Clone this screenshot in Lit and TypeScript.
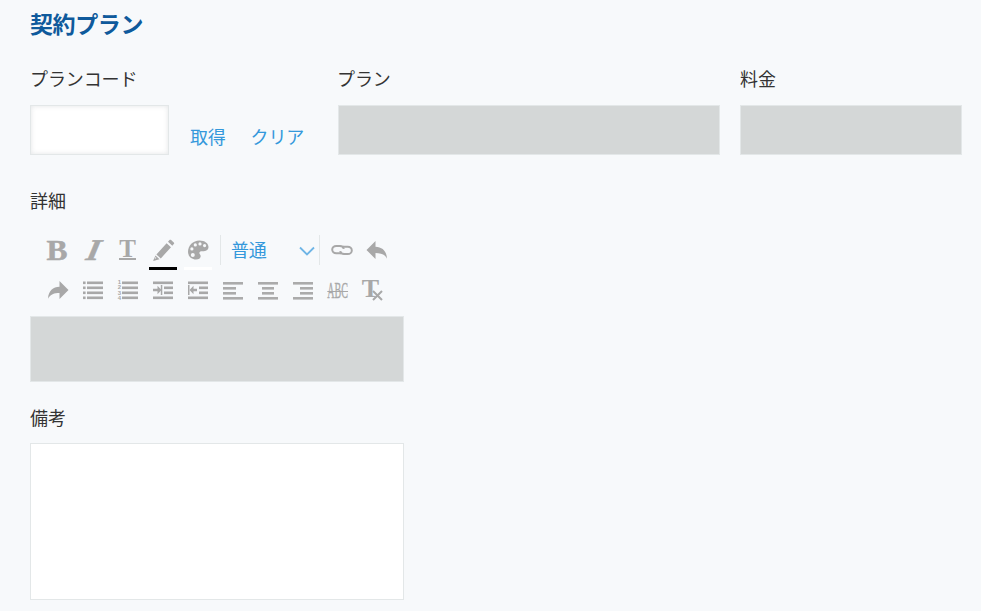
import { LitElement, html, css, svg } from "lit";
import { customElement } from "lit/decorators.js";

const ic = (body: unknown, size = 24) => html`<svg class="ic" width=${size} height=${size} viewBox="0 0 24 24" fill="#a8a8a8">${body}</svg>`;

const bars = (rows: [number, number][]) =>
  rows.map(([x, y]) => svg`<rect x=${x} y=${y} width=${22 - x} height="2.6"/>`);

const fourBars = (x: number) => bars([[x, 3.5], [x, 8.5], [x, 13.5], [x, 18.5]]);

const icons = {
  pen: ic(svg`<path d="M15.6 5.2l4.400 4L9.800 20.400l-4.400-4zM17 3.700l1.500-1.600c.5-.5 1.100-.5 1.600 0l2.700 2.400c.5.5.5 1.100 0 1.600l-1.500 1.600zM4.500 17.600l4 3.600L2 23z"/><path d="M5.400 19.900l-1-.9-.7 1.900z" fill="#f7f9fb"/>`),
  palette: ic(svg`<path fill-rule="evenodd" d="M13.500 2.500c5.300 0 9 2.900 9 6.500 0 3.400-3.300 4.500-6.300 4.300-1.800-.1-3 .6-2.800 2 .2 1.100 1.300 1.500 1.300 2.900 0 2-2 3.300-4.700 3.300C5.600 21.500 2 18.200 2 14 2 7.500 7 2.500 13.500 2.500zM14 4.300a1.600 1.600 0 1 0 0 3.200 1.600 1.600 0 0 0 0-3.200zM18.600 6a1.600 1.600 0 1 0 0 3.200 1.600 1.600 0 0 0 0-3.200zM9.300 5.300a1.600 1.600 0 1 0 0 3.200 1.600 1.600 0 0 0 0-3.200zM5.900 9.300a1.600 1.600 0 1 0 0 3.200 1.600 1.600 0 0 0 0-3.200zM6.800 15a2 2 0 1 0 0 4 2 2 0 0 0 0-4z"/>`),
  link: ic(svg`<g fill="none" stroke="#a8a8a8" stroke-width="2"><path d="M11.500 15.500a4.300 3 0 0 0-1.500-.2H6.200a4 3.700 0 0 1 0-7.400H10a4 3.700 0 0 1 3.800 3"/><path d="M12.500 8.500a4.300 3 0 0 0 1.500.2h3.800a4 3.700 0 0 1 0 7.400H14a4 3.700 0 0 1-3.800-3"/></g>`),
  reply: ic(svg`<path d="M10.500 3v5.700c6.500.3 11 3.700 11.500 12-2.300-4.600-6.300-5.800-11.500-5.800V21L1.500 12z"/>`),
  forward: ic(svg`<path d="M13.500 3v5.700C7 9 2.500 12.400 2 20.700c2.300-4.600 6.300-5.800 11.500-5.800V21l9-9z"/>`),
  ul: ic(svg`${fourBars(6)}<rect x="2" y="3.500" width="2.600" height="2.600"/><rect x="2" y="8.500" width="2.600" height="2.600"/><rect x="2" y="13.500" width="2.600" height="2.600"/><rect x="2" y="18.500" width="2.600" height="2.600"/>`),
  ol: ic(svg`${fourBars(6)}<g class="nums"><text x="1.800" y="5.500">1</text><text x="1.800" y="11">2</text><text x="1.800" y="16.500">3</text><text x="1.800" y="22">4</text></g>`),
  indent: ic(svg`${bars([[2, 3.5], [13, 8.5], [13, 13.5], [2, 18.5]])}<path d="M2 10.700h4.500V7.800l4 4.200-4 4.200v-2.900H2z"/><rect x="9.800" y="7" width="1.500" height="10"/>`),
  outdent: ic(svg`${bars([[2, 3.5], [13, 8.5], [13, 13.5], [2, 18.5]])}<path d="M11 10.700H7.500V7.800l-4 4.200 4 4.200v-2.900H11z"/><rect x="2" y="7" width="1.500" height="10"/>`),
  left: ic(svg`<g fill="#ababab"><rect x="2" y="4" width="20" height="2.600"/><rect x="2" y="9" width="13" height="2.600"/><rect x="2" y="14" width="13" height="2.600"/><rect x="2" y="19" width="20" height="2.600"/></g>`),
  center: ic(svg`<g fill="#ababab"><rect x="2" y="4" width="20" height="2.600"/><rect x="6" y="9" width="12" height="2.600"/><rect x="6" y="14" width="12" height="2.600"/><rect x="2" y="19" width="20" height="2.600"/></g>`),
  right: ic(svg`<g fill="#ababab"><rect x="2" y="4" width="20" height="2.600"/><rect x="9" y="9" width="13" height="2.600"/><rect x="9" y="14" width="13" height="2.600"/><rect x="2" y="19" width="20" height="2.600"/></g>`),
};

@customElement("app-root")
export class AppRoot extends LitElement {
  static styles = css`
    :host {
      display: block;
      height: 611px;
      overflow: hidden;
      box-sizing: border-box;
      padding: 9px 19px 0 30px;
      background: #f7f9fb;
      color: #333;
      font-family: "Noto Sans CJK JP", "Noto Sans", sans-serif;
    }
    h1 {
      margin: 0;
      font-size: 23px;
      line-height: 28px;
      font-weight: 700;
      letter-spacing: -0.4px;
      color: #0f5a9c;
    }
    .label {
      display: block;
      font-size: 18px;
      line-height: 26px;
      letter-spacing: -0.1px;
    }
    .top {
      display: flex;
      margin-top: 28px;
    }
    .top .label { margin-bottom: 14px; }
    .plan .label { margin-left: -1px; }
    .code { width: 308px; }
    .code-row { display: flex; align-items: flex-end; }
    .input {
      box-sizing: border-box;
      width: 139px;
      height: 50px;
      background: #fff;
      border: 1px solid #e3e7e8;
      box-shadow: inset 0 0 5px rgba(55, 70, 80, 0.14);
    }
    .links {
      display: flex;
      gap: 25px;
      margin-left: 21px;
      padding-bottom: 6px;
      font-size: 18px;
      line-height: 26px;
      letter-spacing: -0.2px;
      color: #3498db;
    }
    .plan { width: 382px; margin-right: 20px; }
    .fee { width: 222px; }
    .disabled {
      box-sizing: border-box;
      height: 50px;
      background: #d4d7d7;
      border: 1px solid #e3e7e8;
    }
    .detail { margin-top: 32px; }
    .toolbar {
      width: 374px;
      margin-top: 17px;
      padding-left: 10px;
      box-sizing: border-box;
    }
    .row { display: flex; height: 40px; align-items: center; }
    .btn {
      position: relative;
      flex: none;
      width: 35px;
      height: 40px;
      display: flex;
      align-items: center;
      justify-content: center;
    }
    .ic { display: block; }
    .nums {
      font-family: "Liberation Sans", sans-serif;
      font-size: 6px;
      font-weight: 700;
    }
    .glyph {
      font-family: "Liberation Serif", serif;
      font-size: 30px;
      line-height: 30px;
      font-weight: 700;
      color: #a8a8a8;
    }
    .b {
      display: inline-block;
      -webkit-text-stroke: 0.5px #a8a8a8;
      transform: scaleX(1.05);
    }
    .i {
      display: inline-block;
      font-style: italic;
      -webkit-text-stroke: 0.5px #a8a8a8;
      transform: translateX(1px) skewX(-12deg) scaleX(1.15);
    }
    .u {
      border-bottom: 2px solid #a8a8a8;
      font-size: 25px;
      line-height: 18px;
      height: 18px;
      margin-top: -1px;
    }
    .abc {
      display: inline-block;
      font-size: 24px;
      font-weight: 400;
      text-decoration: line-through;
      text-decoration-thickness: 1px;
      letter-spacing: 0;
      -webkit-text-stroke: 0.4px #a8a8a8;
      transform: scaleX(0.42);
      white-space: nowrap;
    }
    .clear { position: relative; font-size: 26px; line-height: 26px; margin-right: 4px; margin-top: -2px; }
    .clear-x { position: absolute; left: 9px; top: 12px; }
    .bar {
      position: absolute;
      left: 4px;
      right: 3px;
      bottom: 0;
      height: 3px;
    }
    .black { background: #000; }
    .white { background: #fff; }
    .sep {
      flex: none;
      width: 1px;
      height: 30px;
      background: #e3e7e8;
    }
    .sep-s { margin-left: 5px; }
    .sep-l { margin-right: 4px; }
    .picker {
      box-sizing: border-box;
      flex: none;
      width: 98px;
      height: 40px;
      padding: 0 3px 2px 10px;
      display: flex;
      align-items: center;
      justify-content: space-between;
      font-size: 18px;
      letter-spacing: -0.2px;
      color: #3498db;
    }
    .picker svg { display: block; margin-top: 3px; }
    .editor {
      box-sizing: border-box;
      width: 374px;
      height: 66px;
      margin-top: 6px;
      background: #d4d7d7;
      border: 1px solid #e3e7e8;
    }
    .notes { margin-top: 22px; }
    .notes .label { margin-bottom: 13px; }
    .area {
      box-sizing: border-box;
      width: 374px;
      height: 157px;
      background: #fff;
      border: 1px solid #e3e7e8;
    }
  `;

  render() {
    const b = (c: unknown) => html`<div class="btn">${c}</div>`;
    return html`
      <h1>契約プラン</h1>
      <div class="top">
        <div class="code">
          <div class="label">プランコード</div>
          <div class="code-row">
            <div class="input"></div>
            <div class="links"><span>取得</span><span>クリア</span></div>
          </div>
        </div>
        <div class="plan"><div class="label">プラン</div><div class="disabled"></div></div>
        <div class="fee"><div class="label">料金</div><div class="disabled"></div></div>
      </div>
      <div class="detail">
        <div class="label">詳細</div>
        <div class="toolbar">
          <div class="row">
            ${b(html`<span class="glyph b">B</span>`)}
            ${b(html`<span class="glyph i">I</span>`)}
            ${b(html`<span class="glyph u">T</span>`)}
            <div class="btn">${icons.pen}<span class="bar black"></span></div>
            <div class="btn">${icons.palette}<span class="bar white"></span></div>
            <span class="sep sep-s"></span>
            <div class="picker">
              <span>普通</span>
              <svg width="18" height="10" viewBox="0 0 18 10" fill="none" stroke="#6fb5e6" stroke-width="1.800"><path d="M2 1.500l7 7 7-7"/></svg>
            </div>
            <span class="sep sep-l"></span>
            ${b(icons.link)}
            ${b(icons.reply)}
          </div>
          <div class="row">
            ${b(icons.forward)}
            ${b(icons.ul)}
            ${b(icons.ol)}
            ${b(icons.indent)}
            ${b(icons.outdent)}
            ${b(icons.left)}
            ${b(icons.center)}
            ${b(icons.right)}
            ${b(html`<span class="glyph abc">ABC</span>`)}
            ${b(html`<span class="glyph clear">T<svg class="clear-x" width="14" height="14" viewBox="0 0 14 14" stroke="#a8a8a8" stroke-width="2"><path d="M2 3l9 9M11 3l-9 9"/></svg></span>`)}
          </div>
        </div>
        <div class="editor"></div>
      </div>
      <div class="notes">
        <div class="label">備考</div>
        <div class="area"></div>
      </div>
    `;
  }
}
